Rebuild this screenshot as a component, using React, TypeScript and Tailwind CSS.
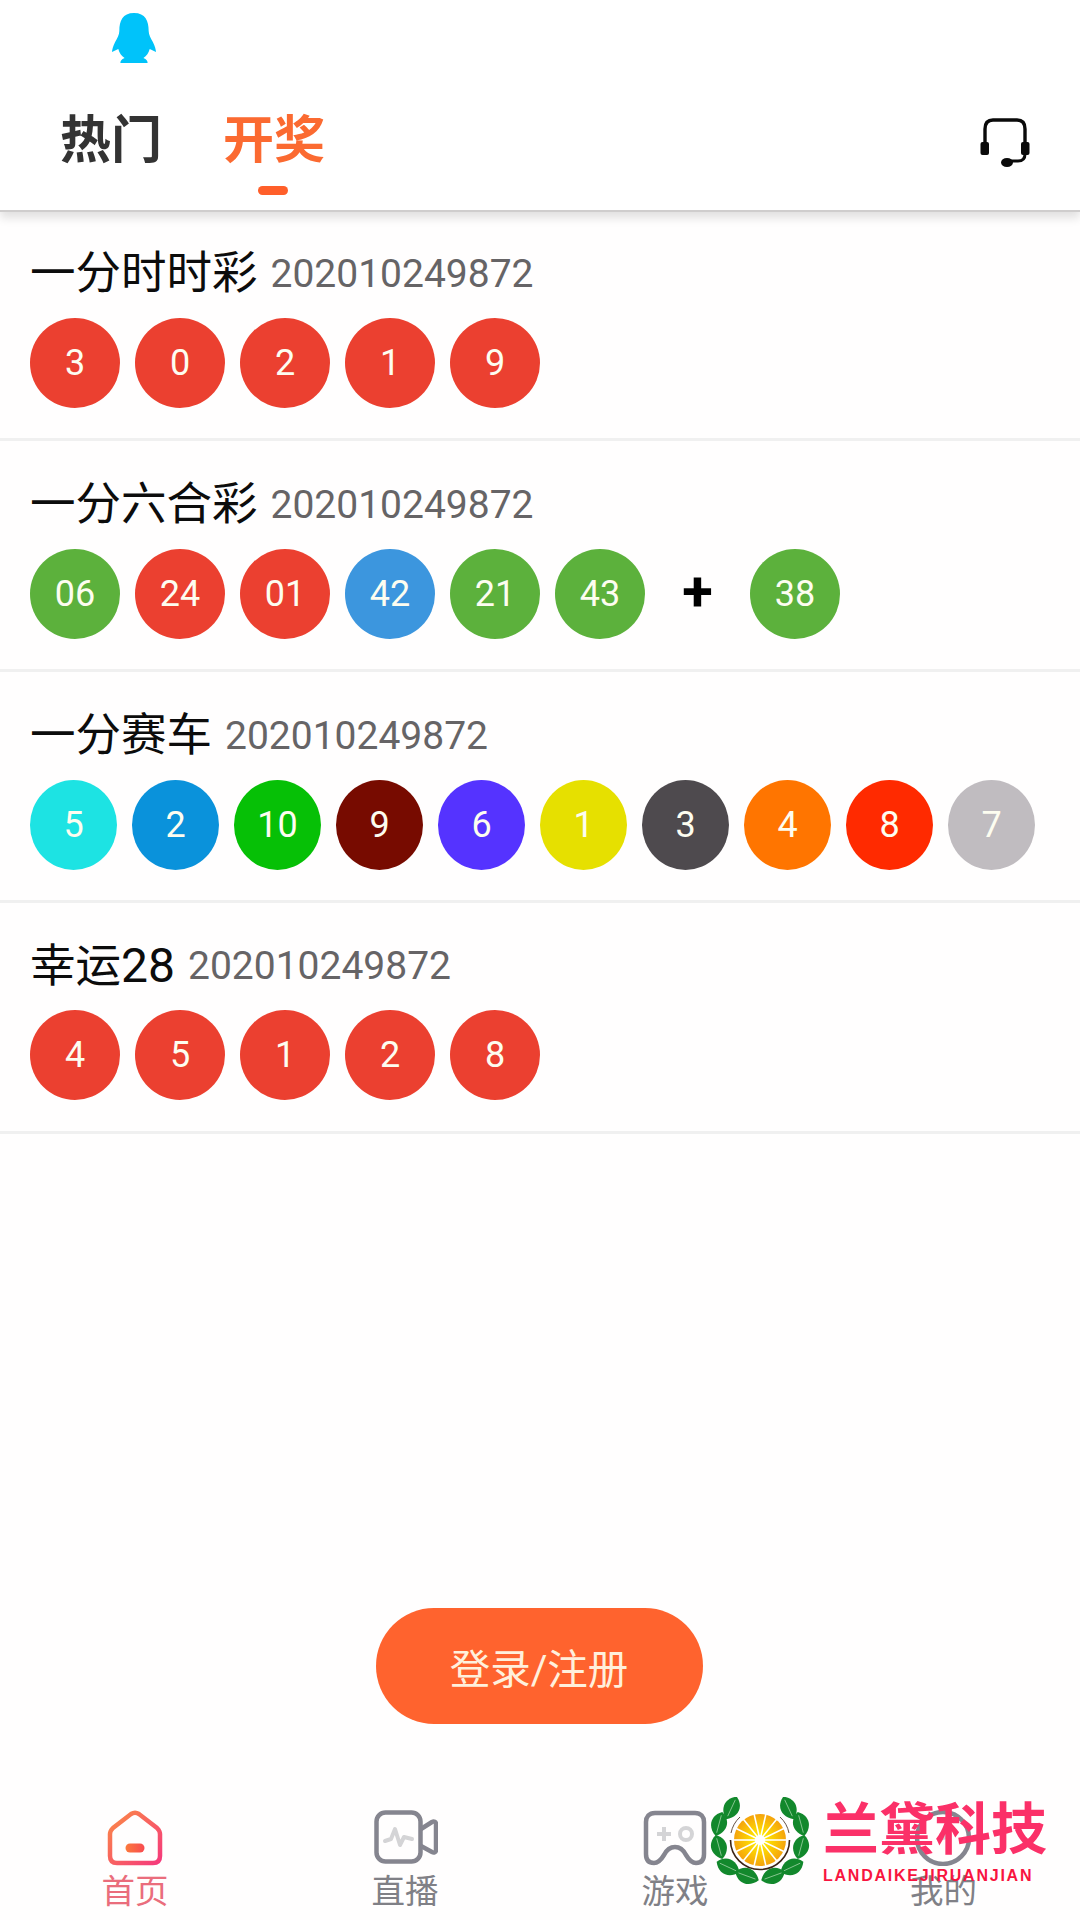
import React from "react";

const cjk = "font-['Roboto','Noto_Sans_CJK_SC',sans-serif]";

const Ball = ({ n, c, w = "w-[90px]" }: { n: string; c: string; w?: string }) => (
  <div className={`${w} h-[90px] rounded-[50%] flex items-center justify-center text-[36px] leading-none text-[#fdfdf0] shrink-0`} style={{ backgroundColor: c }}>
    {n}
  </div>
);

const R = "#eb4030", G = "#5cb13c", B = "#3c96de";

const Row = ({ title, balls }: { title: React.ReactNode; balls: React.ReactNode }) => (
  <div className="h-[230.8px] pt-[33.6px] border-b-[3px] border-[#f0f0f0]">
    <div className="pl-[30px] h-[60px] flex items-center">
      <span className="text-[45.5px] leading-[60px] text-[#0c0c0c]">{title}</span>
      <span className="ml-[13px] text-[39px] leading-[60px] text-[#666466]">202010249872</span>
    </div>
    <div className="mt-[14px] pl-[30px] flex gap-[15px] items-center">{balls}</div>
  </div>
);

const Leaf = ({ x, y, r }: { x: number; y: number; r: number }) => (
  <g transform={`translate(${x} ${y}) rotate(${r})`}>
    <path d="M0 -12.500C11 -6 10 6 0 12.500C-10 6 -11 -6 0 -12.500Z" fill="#12882c" />
    <path d="M0 -9V9" stroke="#bfe3c0" strokeWidth="0.6" />
  </g>
);

const Logo = () => {
  const spokes = Array.from({ length: 14 }, (_, i) => (i * 360) / 14);
  const leaves = [
    { x: 21.5, y: 11, r: 25 },
    { x: 9, y: 27, r: 15 },
    { x: 9, y: 50, r: -15 },
    { x: 18, y: 70, r: -65 },
    { x: 37, y: 79, r: -70 },
    { x: 78.5, y: 11, r: -25 },
    { x: 91, y: 27, r: -15 },
    { x: 91, y: 50, r: 15 },
    { x: 82, y: 70, r: 65 },
    { x: 63, y: 79, r: 70 },
  ];
  return (
    <svg viewBox="0 0 100 90" className="absolute left-[710px] top-[1797px] w-[100px] h-[90px]">
      <defs>
        <radialGradient id="o">
          <stop offset="0.2" stopColor="#ffe900" />
          <stop offset="1" stopColor="#f5a30c" />
        </radialGradient>
      </defs>
      {leaves.map((l, i) => (
        <Leaf key={i} {...l} />
      ))}
      <circle cx="50" cy="43" r="29.500" fill="#fff" />
      <path d="M20.500 43a29.500 29.500 0 0 0 59 0" fill="none" stroke="#3c2415" strokeWidth="1.6" />
      <path d="M21 36a29.500 29.500 0 0 1 9-16" fill="none" stroke="#3c2415" strokeWidth="0.8" />
      <path d="M79 36a29.500 29.500 0 0 0 -9 -16" fill="none" stroke="#3c2415" strokeWidth="0.8" />
      <circle cx="50" cy="43" r="26" fill="url(#o)" />
      {spokes.map((a) => (
        <line key={a} x1="50" y1="43" x2={50 + 27 * Math.cos((a * Math.PI) / 180)} y2={43 + 27 * Math.sin((a * Math.PI) / 180)} stroke="#fff" strokeWidth="1.6" />
      ))}
      <circle cx="50" cy="43" r="5" fill="#fff" />
    </svg>
  );
};

export default function App() {
  return (
    <div className={`relative w-[1080px] h-[1920px] overflow-hidden bg-[#fffefe] flex flex-col ${cjk}`}>
      {/* header */}
      <div className="relative z-10 h-[212px] shrink-0 bg-white border-b-[2px] border-[#cfcdcd] shadow-[0_6px_9px_rgba(0,0,0,0.12)] flex flex-col">
        <div className="h-[80px] pl-[112px] pt-[12px]">
          <svg viewBox="0 0 42 52" preserveAspectRatio="none" className="w-[44px] h-[52px]">
            <path d="M21 1C10 1 7 9 7 19C7 23 5 26 3 30C1 34 0 38 0 40L6 37C7 41 9 44 12 46C9 47 8 49 8 51H34C34 49 33 47 30 46C33 44 35 41 36 37L42 40C42 38 41 34 39 30C37 26 35 23 35 19C35 9 32 1 21 1Z" fill="#00c3fa" />
          </svg>
        </div>
        <div className="flex-1 flex items-start pl-[60px] pr-[50px] relative">
          <div className="text-[51px] leading-[66px] font-bold text-[#333333] mt-[28px] w-[163px]">热门</div>
          <div className="text-[51px] leading-[66px] font-bold text-[#fb6a31] mt-[28px] relative">
            开奖
            <div className="absolute left-[35px] top-[78px] w-[30px] h-[9px] rounded-full bg-[#ff5f2a]" />
          </div>
          <svg viewBox="0 0 50 50" className="ml-auto mt-[38px] w-[50px] h-[50px]" fill="none">
            <path d="M5 26V11C5 5 8 2 13 2H37C42 2 45 5 45 11V26" stroke="#0a0a0a" strokeWidth="3.4" />
            <rect x="0.5" y="24" width="8.5" height="13" rx="2" fill="#0a0a0a" />
            <rect x="41" y="24" width="8.5" height="13" rx="2" fill="#0a0a0a" />
            <path d="M45 36C45 41 42 43 38 43H29" stroke="#0a0a0a" strokeWidth="3" />
            <ellipse cx="27" cy="44.5" rx="6" ry="4.5" fill="#0a0a0a" />
          </svg>
        </div>
      </div>

      {/* list */}
      <div className="shrink-0 -mt-[1.500px]">
        <Row title="一分时时彩" balls={["3", "0", "2", "1", "9"].map((n, i) => <Ball key={i} n={n} c={R} />)} />
        <Row
          title="一分六合彩"
          balls={
            <>
              <Ball n="06" c={G} />
              <Ball n="24" c={R} />
              <Ball n="01" c={R} />
              <Ball n="42" c={B} />
              <Ball n="21" c={G} />
              <Ball n="43" c={G} />
              <div className="w-[75px] text-center text-[56px] leading-none font-bold text-black mb-[6px]">+</div>
              <Ball n="38" c={G} />
            </>
          }
        />
        <Row
          title="一分赛车"
          balls={[
            ["5", "#1de3e3"],
            ["2", "#0a92db"],
            ["10", "#06c006"],
            ["9", "#770b00"],
            ["6", "#5533ff"],
            ["1", "#e6e000"],
            ["3", "#4e4a4e"],
            ["4", "#ff7500"],
            ["8", "#ff2a00"],
            ["7", "#c0bcc0"],
          ].map(([n, c]) => <Ball key={n} n={n} c={c} w="w-[87px]" />)}
        />
        <Row
          title={
            <>
              幸运<span className="text-[48px]">28</span>
            </>
          }
          balls={["4", "5", "1", "2", "8"].map((n, i) => <Ball key={i} n={n} c={R} />)}
        />
      </div>

      {/* login */}
      <div className="flex-1 flex items-end justify-center pb-[9px] pr-[2px]">
        <div className="w-[327px] h-[116px] pt-[8px] rounded-full bg-[#ff632e] flex items-center justify-center text-[40.5px] text-[#fff0dc]">登录/注册</div>
      </div>

      {/* tab bar */}
      <div className="h-[187px] shrink-0 grid grid-cols-4 pt-[77px]">
        <div className="flex flex-col items-center">
          <svg viewBox="0 0 56 56" className="w-[56px] h-[56px]" fill="none">
            <defs>
              <linearGradient id="h" x1="0" y1="0" x2="1" y2="1">
                <stop offset="0" stopColor="#fb8a46" />
                <stop offset="1" stopColor="#f53a7c" />
              </linearGradient>
              <linearGradient id="h2" x1="0" y1="0" x2="1" y2="0">
                <stop offset="0" stopColor="#fb7a3c" />
                <stop offset="1" stopColor="#f84a50" />
              </linearGradient>
            </defs>
            <path d="M3 24C3 21 4 20 6 18L24 4C26.500 2.500 29.500 2.500 32 4L50 18C52 20 53 21 53 24V46C53 51 50 53 46 53H10C6 53 3 51 3 46Z" stroke="url(#h)" strokeWidth="4.500" />
            <rect x="18.500" y="33.500" width="19" height="9" rx="4.500" fill="url(#h2)" />
          </svg>
          <div className="text-[33.5px] leading-[40px] mt-[6px] text-[#ea6d7c] whitespace-nowrap">首页</div>
        </div>
        <div className="flex flex-col items-center">
          <svg viewBox="0 0 64 56" className="w-[64px] h-[56px] shrink-0 translate-x-[1px]" fill="none">
            <rect x="2.500" y="2.500" width="44" height="49" rx="9" stroke="#85858f" strokeWidth="4.500" />
            <path d="M47 19L58 12C60 11 62 12 62 14V40C62 42 60 43 58 42L47 36" stroke="#85858f" strokeWidth="4.500" strokeLinejoin="round" />
            <path d="M11 31L17 29L21 19L26 35L30 27L38 29" stroke="#d4d4d6" strokeWidth="4" strokeLinejoin="round" strokeLinecap="round" />
          </svg>
          <div className="text-[33.5px] leading-[40px] mt-[6px] text-[#808086] whitespace-nowrap">直播</div>
        </div>
        <div className="flex flex-col items-center">
          <svg viewBox="0 0 64 56" className="w-[64px] h-[56px] shrink-0" fill="none">
            <path d="M12 3H52C58 3 61 7 61 12V44C61 50 58 53 53 53C49 53 46 50 43 45C41 41 37 37 32 37C27 37 23 41 21 45C18 50 15 53 11 53C6 53 3 50 3 44V12C3 7 6 3 12 3Z" stroke="#85858f" strokeWidth="4.500" />
            <path d="M14 24H28M21 17V31" stroke="#d4d4d6" strokeWidth="4" />
            <circle cx="43" cy="24" r="6" stroke="#d4d4d6" strokeWidth="4" />
          </svg>
          <div className="text-[33.5px] leading-[40px] mt-[6px] text-[#808086] whitespace-nowrap">游戏</div>
        </div>
        <div className="flex flex-col items-center">
          <svg viewBox="0 0 64 56" className="w-[64px] h-[56px] shrink-0" fill="none">
            <circle cx="30" cy="28" r="26" stroke="#85858f" strokeWidth="4.500" />
            <circle cx="30" cy="26" r="4" fill="#d4d4d6" />
          </svg>
          <div className="text-[33.5px] leading-[40px] mt-[6px] -ml-[3px] text-[#808086] whitespace-nowrap">我的</div>
        </div>
      </div>

      {/* watermark */}
      <Logo />
      <div className="absolute left-[822px] top-[1790px] w-[226px] text-center text-[56px] leading-[80px] font-bold text-[#fb3068] font-['Liberation_Serif','Noto_Sans_CJK_SC',serif] whitespace-nowrap">兰黛科技</div>
      <div className="absolute left-[823px] top-[1867px] text-[16px] leading-[18px] tracking-[1.75px] font-bold text-[#f8143f] font-['Liberation_Sans',sans-serif] whitespace-nowrap">LANDAIKEJIRUANJIAN</div>
    </div>
  );
}
